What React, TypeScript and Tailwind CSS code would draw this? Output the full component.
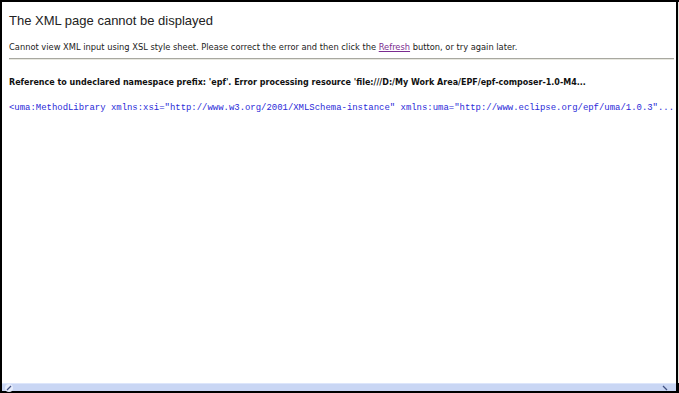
export default function App() {
  return (
    <div className="flex h-[393px] w-[679px] flex-col border-l-2 border-r-[3px] border-t-2 border-b-2 border-black bg-white">
      <div className="flex min-h-0 flex-1">
        <div className="flex-1 pl-[7px] pr-[4px] pt-[10px] font-['DejaVu_Sans',sans-serif] text-[#000]">
          <h1 className="font-['Liberation_Sans',sans-serif] text-[13px] leading-[18px] text-[#222]">The XML page cannot be displayed</h1>
          <p className="mt-[11px] text-[8.3px] leading-[12px] text-[#222]">
            Cannot view XML input using XSL style sheet. Please correct the error and then click the{' '}
            <span className="text-[#7b2c8f] underline">Refresh</span> button, or try again later.
          </p>
          <div className="mt-[5px] h-[2px] border-t border-[#a8a8a0] bg-[#e8e8e0]" />
          <p className="mt-[17px] text-[8px] font-bold leading-[12px] text-[#111]">
            Reference to undeclared namespace prefix: 'epf'. Error processing resource 'file:///D:/My Work Area/EPF/epf-composer-1.0-M4...
          </p>
          <p className="mt-[13px] whitespace-pre font-['Liberation_Mono',monospace] text-[8.95px] leading-[12px] text-[#2a2ad8]">
            {'<uma:MethodLibrary xmlns:xsi="http://www.w3.org/2001/XMLSchema-instance" xmlns:uma="http://www.eclipse.org/epf/uma/1.0.3"...'}
          </p>
        </div>
        <div className="w-[5px] bg-[#f2f2ec] border-l border-[#e4e4dc]" />
      </div>
      <div className="flex h-[8px] items-center bg-[#c9d6f4] border-t border-[#dde6fb]">
        <svg width="10" height="8" viewBox="0 0 10 8" className="ml-[2px]">
          <circle cx="5" cy="4" r="4" fill="#e6ecfb" />
          <path d="M3 6 L7 2" stroke="#405080" strokeWidth="1.3" />
        </svg>
        <div className="flex-1" />
        <svg width="10" height="8" viewBox="0 0 10 8" className="mr-[6px]">
          <path d="M3 2 L7 6" stroke="#405080" strokeWidth="1.3" />
        </svg>
      </div>
    </div>
  )
}
